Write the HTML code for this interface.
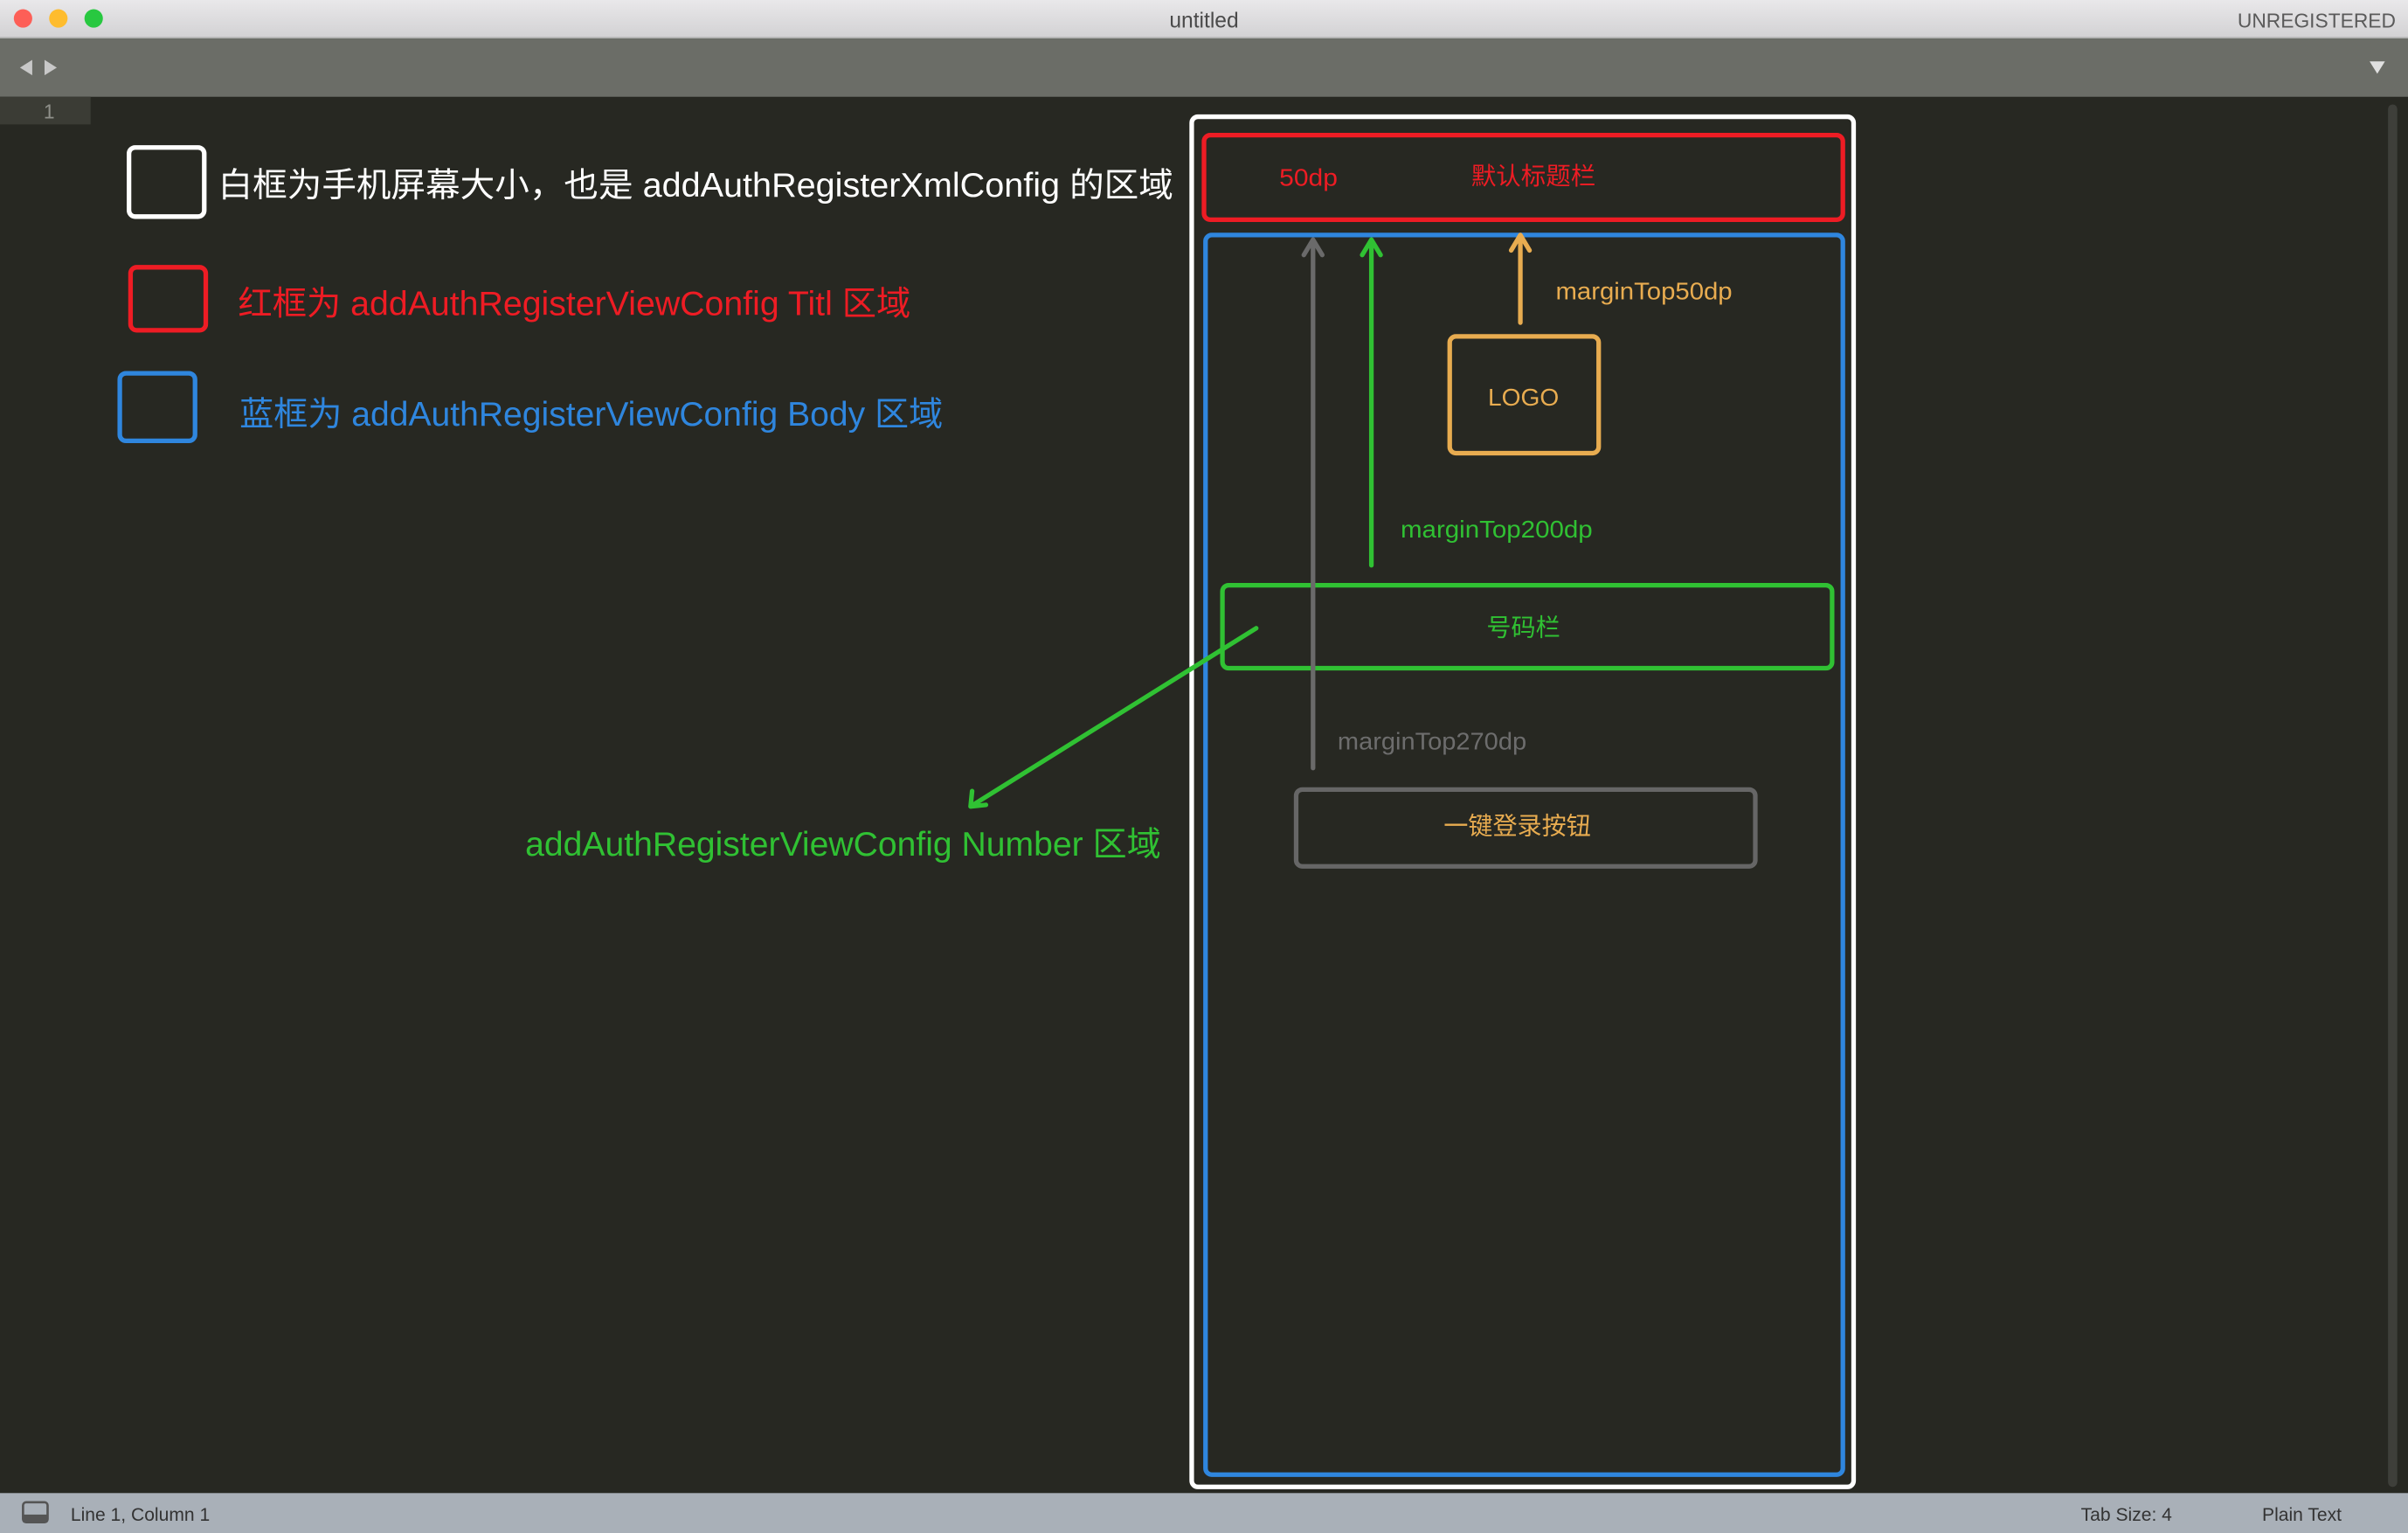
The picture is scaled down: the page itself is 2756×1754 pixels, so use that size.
<!DOCTYPE html>
<html><head><meta charset="utf-8"><style>
html,body{margin:0;padding:0;background:#272822;overflow:hidden}
svg{display:block}
text{font-family:"Liberation Sans","Noto Sans CJK SC",sans-serif}
</style></head><body>
<svg width="2756" height="1754" viewBox="0 0 1568 998" preserveAspectRatio="none" xmlns="http://www.w3.org/2000/svg">
<defs><linearGradient id="tb" x1="0" y1="0" x2="0" y2="1"><stop offset="0" stop-color="#e9e8ea"/><stop offset="1" stop-color="#d2d1d3"/></linearGradient></defs>
<rect width="1568" height="998" fill="#272822"/>
<rect width="1568" height="25" fill="url(#tb)"/>
<rect y="24" width="1568" height="1" fill="#b5b5b5"/>
<circle cx="15" cy="12" r="6" fill="#fd5f57"/>
<circle cx="38" cy="12" r="6" fill="#febc2e"/>
<circle cx="61" cy="12" r="6" fill="#28c840"/>
<text x="784" y="18" font-size="14" fill="#4a4a4a" text-anchor="middle">untitled</text>
<text x="1560" y="18" font-size="13" fill="#5a5a5a" text-anchor="end" textLength="103" lengthAdjust="spacingAndGlyphs">UNREGISTERED</text>
<rect y="25" width="1568" height="38" fill="#6b6d67"/>
<path d="M13 44 L21 39 L21 49Z" fill="#c8c8c8"/>
<path d="M37 44 L29 39 L29 49Z" fill="#c8c8c8"/>
<path d="M1543 40 L1553 40 L1548 48Z" fill="#e0e0e0"/>
<rect x="0" y="63" width="59" height="18" fill="#3b3c35"/>
<text x="32" y="77" font-size="13" fill="#8f908a" text-anchor="middle" font-family="Liberation Mono">1</text>
<rect x="1555" y="68" width="6" height="900" rx="3" fill="#3e3f3a"/>
<rect y="972" width="1568" height="26" fill="#a9b0b8"/>
<rect x="15" y="978" width="16" height="13" rx="2" fill="none" stroke="#555" stroke-width="1.5"/>
<rect x="15" y="986" width="16" height="5" fill="#555"/>
<text x="46" y="990" font-size="12" fill="#333">Line 1, Column 1</text>
<text x="1355" y="990" font-size="12" fill="#333">Tab Size: 4</text>
<text x="1473" y="990" font-size="12" fill="#333">Plain Text</text>

<rect x="84" y="96" width="49" height="45" rx="4" fill="none" stroke="#fff" stroke-width="3"/>
<text x="142" y="128" font-size="22" fill="#fff" textLength="622" lengthAdjust="spacingAndGlyphs">白框为手机屏幕大小，也是 addAuthRegisterXmlConfig 的区域</text>
<rect x="85" y="174" width="49" height="41" rx="4" fill="none" stroke="#ee1c24" stroke-width="3"/>
<text x="155" y="205" font-size="22" fill="#ee1c24" textLength="438" lengthAdjust="spacingAndGlyphs">红框为 addAuthRegisterViewConfig Titl 区域</text>
<rect x="78" y="243" width="49" height="44" rx="4" fill="none" stroke="#2f86de" stroke-width="3"/>
<text x="156" y="277" font-size="22" fill="#2f86de" textLength="458" lengthAdjust="spacingAndGlyphs">蓝框为 addAuthRegisterViewConfig Body 区域</text>
<text x="342" y="557" font-size="22" fill="#30c133" textLength="414" lengthAdjust="spacingAndGlyphs">addAuthRegisterViewConfig Number 区域</text>

<rect x="776" y="76" width="431" height="892" rx="4" fill="none" stroke="#fff" stroke-width="3"/>
<rect x="784" y="88" width="416" height="55" rx="4" fill="none" stroke="#ee1c24" stroke-width="3"/>
<text x="833" y="121" font-size="16" fill="#ee1c24" textLength="38" lengthAdjust="spacingAndGlyphs">50dp</text>
<text x="958" y="120" font-size="16" fill="#ee1c24" textLength="81" lengthAdjust="spacingAndGlyphs">默认标题栏</text>
<rect x="785" y="153" width="415" height="807" rx="4" fill="none" stroke="#2f86de" stroke-width="3"/>
<rect x="944" y="219" width="97" height="76" rx="4" fill="none" stroke="#e8ac50" stroke-width="3"/>
<text x="992" y="264" font-size="16" fill="#e8ac50" text-anchor="middle">LOGO</text>
<text x="1013" y="195" font-size="16" fill="#e8ac50" textLength="115" lengthAdjust="spacingAndGlyphs">marginTop50dp</text>
<text x="912" y="350" font-size="16" fill="#30c133" textLength="125" lengthAdjust="spacingAndGlyphs">marginTop200dp</text>
<rect x="796" y="381" width="397" height="54" rx="4" fill="none" stroke="#30c133" stroke-width="3"/>
<text x="992" y="414" font-size="16" fill="#30c133" text-anchor="middle">号码栏</text>
<text x="871" y="488" font-size="16" fill="#6d6d6d" textLength="123" lengthAdjust="spacingAndGlyphs">marginTop270dp</text>
<rect x="844" y="514" width="299" height="50" rx="4" fill="none" stroke="#666" stroke-width="3"/>
<text x="988" y="543" font-size="16" fill="#e8ac50" text-anchor="middle">一键登录按钮</text>
<g fill="none" stroke-width="3" stroke-linecap="round" stroke-linejoin="round">
<path d="M855 500 L855 156 M849 166 L855 156 L861 166" stroke="#6a6a6a"/>
<path d="M893 368 L893 156 M887 166 L893 156 L899 166" stroke="#30c133"/>
<path d="M990 210 L990 153 M984 163 L990 153 L996 163" stroke="#e8ac50"/>
<path d="M818 409 L632 525 M633 515 L632 525 L642 524" stroke="#30c133"/>
</g>
</svg>
</body></html>
